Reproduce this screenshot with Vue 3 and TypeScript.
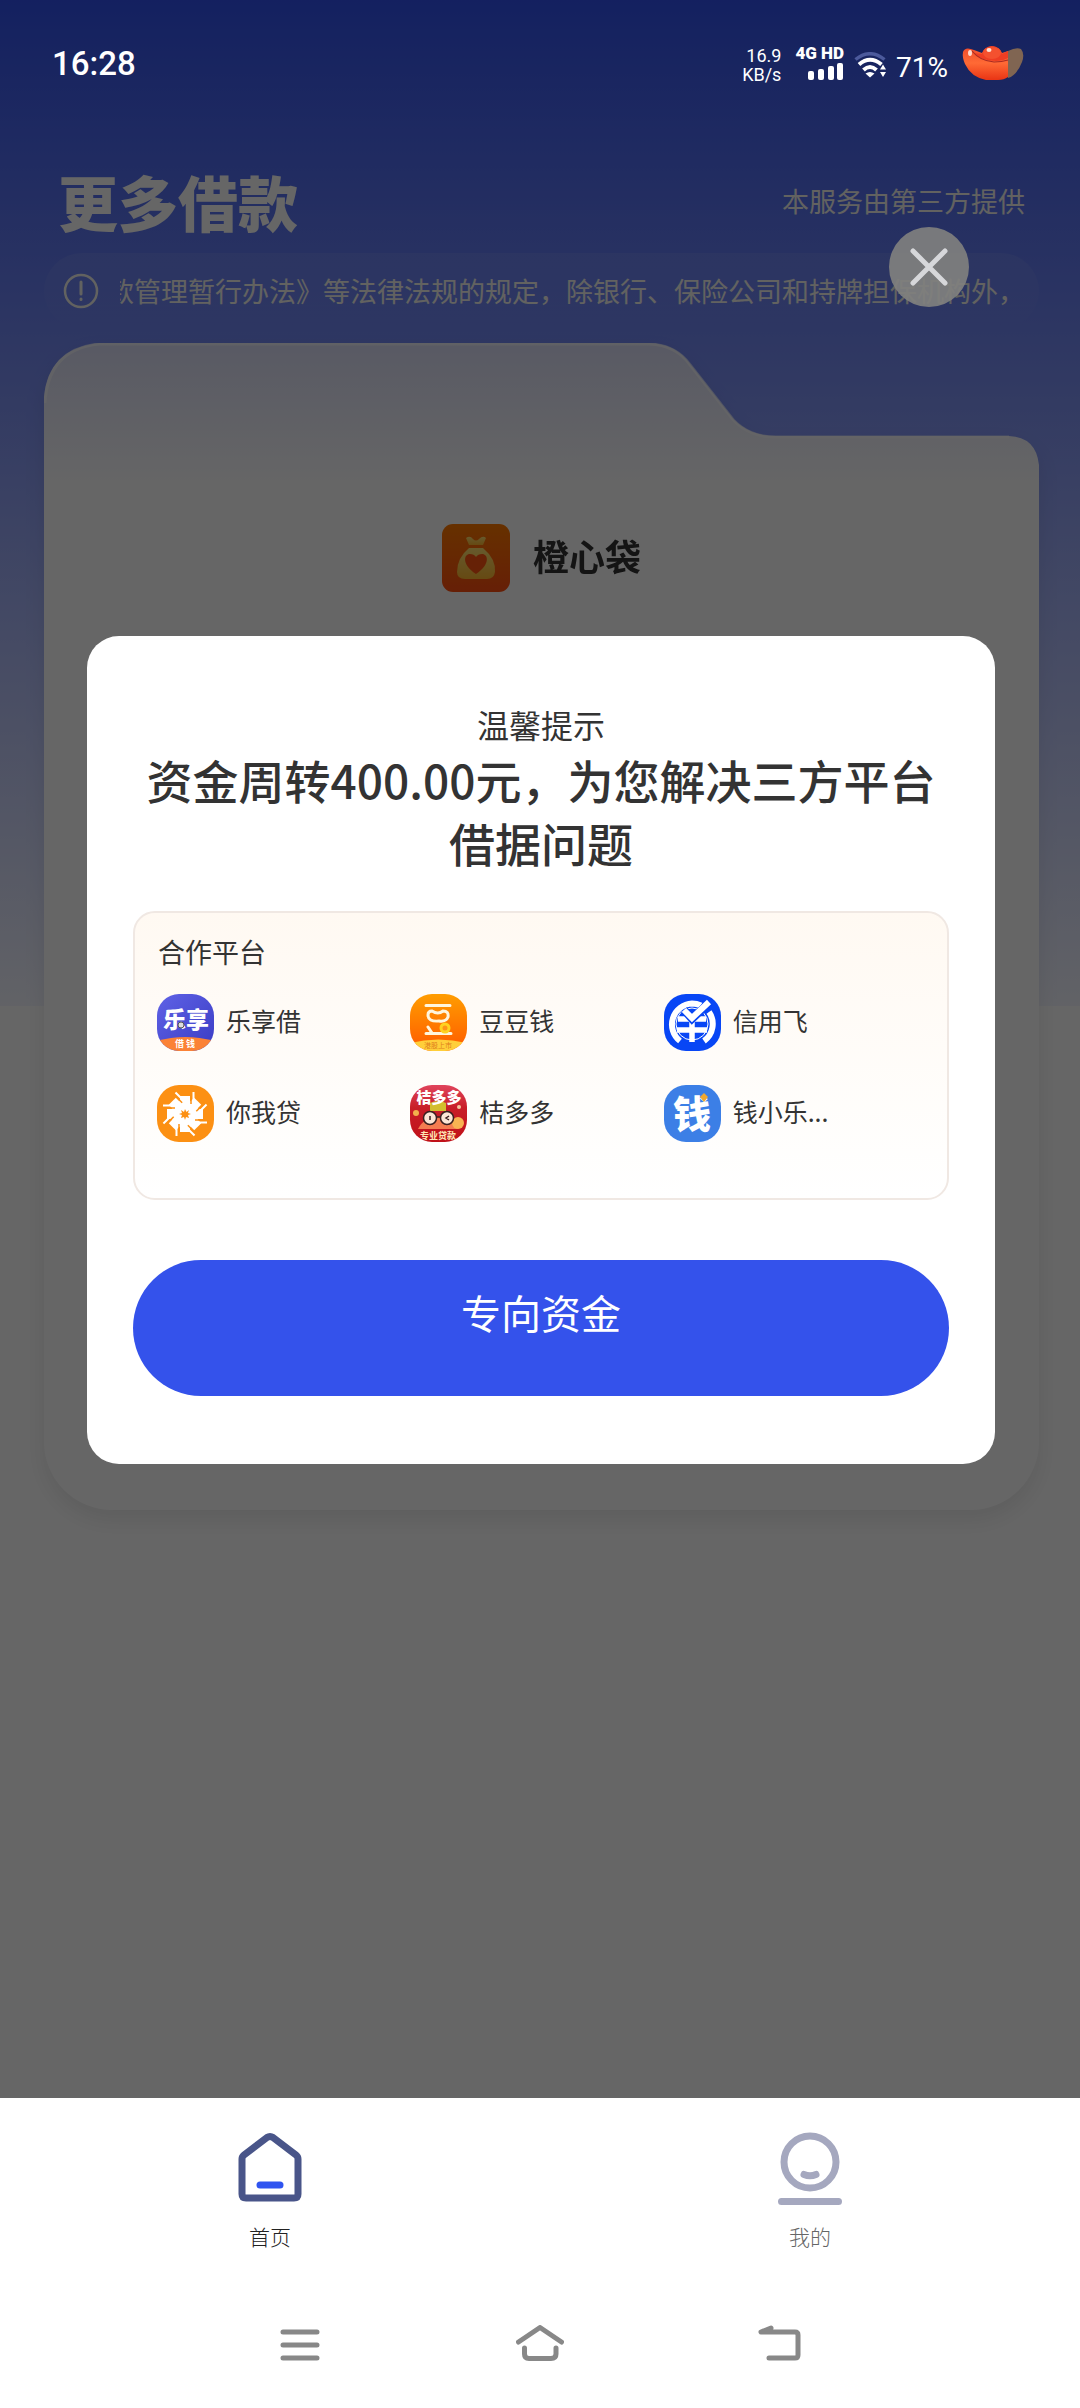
<script setup lang="ts">
import { ref } from 'vue'

interface Platform {
  id: string
  name: string
}

const platforms: Platform[] = [
  { id: 'lexiang', name: '乐享借' },
  { id: 'doudou', name: '豆豆钱' },
  { id: 'xinyong', name: '信用飞' },
  { id: 'niwo', name: '你我贷' },
  { id: 'jududuo', name: '桔多多' },
  { id: 'qianxiaole', name: '钱小乐...' },
]

const blades: number[] = [0, 45, 90, 135, 180, 225, 270, 315]
const open = ref<boolean>(true)
const notice = '款管理暂行办法》等法律法规的规定，除银行、保险公司和持牌担保机构外，'
</script>

<template>
  <div class="app">
    <header class="status">
      <time class="clock">16:28</time>
      <div class="indicators">
        <div class="speed"><span>16.9</span><span>KB/s</span></div>
        <div class="cell">
          <span>4G HD</span>
          <svg width="36" height="17" viewBox="0 0 36 17" fill="#fff" aria-hidden="true">
            <rect x="0" y="8" width="6" height="9" rx="2" />
            <rect x="10" y="6" width="6" height="11" rx="2" />
            <rect x="20" y="3" width="6" height="14" rx="2" />
            <rect x="29" y="0" width="6" height="17" rx="2" />
          </svg>
        </div>
        <svg class="wifi" width="34" height="26" viewBox="0 0 34 26" fill="none" aria-hidden="true">
          <path d="M1.5 7.5Q16 -4 30.5 7.5" stroke="#4c5a9c" stroke-width="3.5" />
          <path d="M5 12.5Q16 3 27.5 12.5" stroke="#fff" stroke-width="4" />
          <path d="M9.5 18Q16 12 22.5 18" stroke="#fff" stroke-width="4" />
          <path d="M11.500 21.500Q16 18.500 20.500 21.500L16 25.500Z" fill="#fff" />
          <path d="M26 17.500L29 12.500L32 17.500ZM26 20L29 25L32 20Z" fill="#fff" />
        </svg>
        <span class="percent">71%</span>
        <svg class="ingot" width="62" height="35" viewBox="0 0 62 35" aria-hidden="true">
          <defs>
            <linearGradient id="ingot" x1="0" y1="0" x2="0" y2="1">
              <stop offset="0" stop-color="#ef4a2c" />
              <stop offset=".5" stop-color="#ff6a35" />
              <stop offset="1" stop-color="#e93414" />
            </linearGradient>
          </defs>
          <path d="M46 5Q54 1 59 3Q63 8 60 16Q55 29 46 32Z" fill="#806552" />
          <path d="M1 6Q3 0 12 4L20 7Q22 1 30 0Q38 1 40 7L46 5V31Q42 34 36 34H24Q9 31 3 18Q0 11 1 6Z" fill="url(#ingot)" />
          <path d="M12 7Q20 15 34 15Q41 15 46 12V5L40 8Q38 1 30 0Q22 1 20 8Z" fill="#ee3d23" />
          <path d="M10 5Q18 15 32 16Q40 16 46 14" fill="none" stroke="#a92a22" stroke-width="1.2" />
          <ellipse cx="30" cy="7" rx="9" ry="6" fill="#f4512f" />
          <ellipse cx="27" cy="4" rx="2.5" ry="2" fill="#ffe3d6" />
          <ellipse cx="8" cy="7" rx="2" ry="3" fill="#ffd9cc" />
        </svg>
      </div>
    </header>

    <main class="page">
      <div class="title-row">
        <h1>更多借款</h1>
        <p>本服务由第三方提供</p>
      </div>

      <div class="notice">
        <svg width="36" height="36" viewBox="0 0 36 36" fill="none" stroke="currentColor" stroke-width="2.5" stroke-linecap="round" aria-hidden="true">
          <circle cx="18" cy="18" r="16" />
          <path d="M18 9V21M18 26V26.5" stroke-width="3" />
        </svg>
        <div class="ticker"><span>{{ notice }}</span></div>
      </div>

      <section class="card">
        <svg class="card-top" viewBox="0 0 996 150" preserveAspectRatio="none" aria-hidden="true">
          <defs>
            <linearGradient id="tab" x1="0" y1="0" x2="0" y2="1">
              <stop offset="0" stop-color="#dde0fa" />
              <stop offset=".95" stop-color="#fff" />
            </linearGradient>
          </defs>
          <path d="M0 150V54Q4 6 55 0H606Q632 1 646 20L690 76Q706 93 732 93H966Q993 94 996 122V150Z" fill="url(#tab)" />
          <path d="M1 60Q4 6 55 1H606Q632 2 646 21L690 77Q706 94 732 94H966" fill="none" stroke="#fff" stroke-opacity=".6" stroke-width="3" />
        </svg>
        <div class="card-body">
          <div class="brand">
            <svg width="68" height="68" viewBox="0 0 68 68" aria-hidden="true">
              <defs>
                <linearGradient id="bag" x1="0" y1="0" x2="0" y2="1">
                  <stop offset="0" stop-color="#ff7a00" />
                  <stop offset="1" stop-color="#ff4e10" />
                </linearGradient>
                <linearGradient id="sack" x1="0" y1="0" x2="0" y2="1">
                  <stop offset="0" stop-color="#ffe070" />
                  <stop offset="1" stop-color="#ffb830" />
                </linearGradient>
              </defs>
              <rect width="68" height="68" rx="11" fill="url(#bag)" />
              <path d="M24 14Q28 11 31 15Q34 18 37 15Q41 11 44 14L41 21H27Z" fill="url(#sack)" />
              <path d="M27 24H41Q54 35 53 48Q52 55 45 55H23Q15 55 15 48Q15 34 27 24Z" fill="url(#sack)" />
              <path d="M34 50C19 40 22 30 28 30Q32 30 34 33Q36 30 40 30C46 30 49 40 34 50Z" fill="#ff5410" />
            </svg>
            <h2>橙心袋</h2>
          </div>
        </div>
      </section>

      <div v-if="open" class="mask">
        <button class="close" type="button" aria-label="关闭" @click="open = false">
          <svg width="40" height="40" viewBox="0 0 40 40" fill="none" stroke="#d6d7da" stroke-width="5" stroke-linecap="round" aria-hidden="true">
            <path d="M4 4L36 36M36 4L4 36" />
          </svg>
        </button>

        <section class="dialog" role="dialog" aria-modal="true">
          <p class="hint">温馨提示</p>
          <h2 class="headline">资金周转400.00元，为您解决三方平台借据问题</h2>

          <div class="partners">
            <h3>合作平台</h3>
            <ul>
              <li v-for="p in platforms" :key="p.id">
                <svg class="logo" viewBox="0 0 57 57" aria-hidden="true">
                  <template v-if="p.id === 'lexiang'">
                    <defs>
                      <linearGradient id="lx" x1="0" y1="0" x2="1" y2="1">
                        <stop offset="0" stop-color="#5f62e6" />
                        <stop offset="1" stop-color="#3a3cc4" />
                      </linearGradient>
                    </defs>
                    <rect width="57" height="57" fill="url(#lx)" />
                    <path d="M0 47Q28 39 57 47V57H0Z" fill="#fb8236" />
                    <text x="29" y="34" font-size="23" font-weight="900" text-anchor="middle" fill="#fff">乐享</text>
                    <circle cx="24" cy="31" r="3" fill="#ddd" stroke="#555" />
                    <text x="28" y="53" font-size="9" font-weight="700" text-anchor="middle" fill="#fff">借 钱</text>
                  </template>
                  <template v-else-if="p.id === 'doudou'">
                    <defs>
                      <linearGradient id="dd" x1="0" y1="0" x2="0" y2="1">
                        <stop offset="0" stop-color="#ff9d00" />
                        <stop offset="1" stop-color="#ff5a00" />
                      </linearGradient>
                    </defs>
                    <rect width="57" height="57" fill="url(#dd)" />
                    <path d="M0 49Q28 42 57 49V57H0Z" fill="#ffcf3a" />
                    <g fill="none" stroke="#fff5dc" stroke-width="3" stroke-linecap="round">
                      <path d="M16 11.5H40M16 39.5H41M18 33L22 39" />
                      <path d="M22 17Q28 21 33 17Q39 17 38 23Q36 28 29 27Q18 28 18 21Q18 17 22 17Z" />
                    </g>
                    <circle cx="35" cy="34" r="4" fill="#ff9418" stroke="#ffd21f" stroke-width="3" />
                    <text x="28" y="54" font-size="7" text-anchor="middle" fill="#e0801c">港股上市</text>
                  </template>
                  <template v-else-if="p.id === 'xinyong'">
                    <rect width="57" height="57" fill="#0846f5" />
                    <path d="M16 47A21 21 0 0 1 28 9.5A21 21 0 0 1 37 11.500M45 18A21 21 0 0 1 40 47" fill="none" stroke="#fff" stroke-width="6" />
                    <circle cx="28" cy="30" r="16" fill="none" stroke="#fff" stroke-width="1" />
                    <path d="M14 25H42M13 36H43M28 28V48" stroke="#fff" stroke-width="5.5" />
                    <path d="M20 16L28 25L46 8" fill="none" stroke="#0846f5" stroke-width="8" />
                    <path d="M20 16L28 24L45 8" fill="none" stroke="#fff" stroke-width="6" />
                  </template>
                  <template v-else-if="p.id === 'niwo'">
                    <rect width="57" height="57" fill="#fc9013" />
                    <g transform="translate(28 29)" fill="none">
                      <circle r="14" fill="#fff" />
                      <g v-for="a in blades" :key="a" :transform="`rotate(${a})`">
                        <path d="M0 -8V-18" stroke="#fff" stroke-width="10" />
                        <path d="M8.500 -12V-22" stroke="#fff" stroke-width="2" />
                      </g>
                      <g v-for="a in blades" :key="`slit-${a}`" :transform="`rotate(${a})`">
                        <path d="M6 -10V-21" stroke="#fc9013" stroke-width="1.5" />
                      </g>
                      <path d="M0 -5L1.500 -2L4 -4L3 -1L6 0L3 1L4 4L1 3L0 6L-1 3L-4 4L-3 1L-6 0L-3 -1L-4 -4L-1 -2Z" fill="#fc9013" />
                    </g>
                  </template>
                  <template v-else-if="p.id === 'jududuo'">
                    <defs>
                      <linearGradient id="jd" x1="0" y1="0" x2="0" y2="1">
                        <stop offset="0" stop-color="#e0445c" />
                        <stop offset=".4" stop-color="#c81e28" />
                        <stop offset="1" stop-color="#c01018" />
                      </linearGradient>
                    </defs>
                    <rect width="57" height="57" fill="url(#jd)" />
                    <path d="M8 44Q14 32 28 32Q42 32 48 44Z" fill="#f47c50" />
                    <circle cx="48" cy="38" r="6" fill="#f8b352" />
                    <circle cx="6" cy="28" r="3" fill="#f3b04c" />
                    <circle cx="49" cy="22" r="2" fill="#f6c9a0" />
                    <path d="M20 18Q28 14 36 18V26H20Z" fill="#d3bd2f" />
                    <text x="29" y="18" font-size="15" font-weight="900" text-anchor="middle" fill="#fff">桔多多</text>
                    <g fill="#fbe6d6" stroke="#3a2020" stroke-width="1.5">
                      <circle cx="20" cy="33" r="6.5" />
                      <circle cx="37" cy="33" r="6.5" />
                      <path d="M26 32H31M20 31V35M39 31L36 33L39 35" fill="none" />
                    </g>
                    <text x="28" y="54" font-size="9" font-weight="700" text-anchor="middle" fill="#ffe9b8">专业贷款</text>
                  </template>
                  <template v-else>
                    <rect width="57" height="57" fill="#3c7fe6" />
                    <text x="28" y="43" font-size="38" font-weight="900" text-anchor="middle" fill="#fff">钱</text>
                    <path d="M40 8L44 12L40 17L36 12Z" fill="#f0a830" />
                  </template>
                </svg>
                <span>{{ p.name }}</span>
              </li>
            </ul>
          </div>

          <button class="cta" type="button">专向资金</button>
        </section>
      </div>
    </main>

    <nav class="tabs">
      <a href="#home" class="active">
        <svg width="72" height="76" viewBox="0 0 72 76" fill="none" stroke-linecap="round" stroke-linejoin="round" aria-hidden="true">
          <path d="M36 8.5Q37.5 8.5 39 9.5L62 27Q64 28.5 64 31V66Q64 70 60 70H12Q8 70 8 66V31Q8 28.5 10 27L33 9.5Q34.5 8.5 36 8.5Z" stroke="#495589" stroke-width="7" />
          <path d="M26 57H46" stroke="#2f54f0" stroke-width="7" />
        </svg>
        <span>首页</span>
      </a>
      <a href="#mine">
        <svg width="72" height="78" viewBox="0 0 72 78" fill="none" stroke="#a5a8bf" stroke-linecap="round" aria-hidden="true">
          <circle cx="36" cy="34" r="26" stroke-width="7" />
          <path d="M30 46.5Q36 49 42 46.5M7.5 73.5H64.5" stroke-width="7" />
        </svg>
        <span>我的</span>
      </a>
    </nav>

    <div class="system-nav">
      <button type="button" aria-label="最近任务">
        <svg width="48" height="40" viewBox="0 0 48 40" aria-hidden="true"><path d="M7 7H41M7 20H41M7 33H41" /></svg>
      </button>
      <button type="button" aria-label="主屏幕">
        <svg width="48" height="40" viewBox="0 0 48 40" aria-hidden="true"><path d="M2.5 17L24 2.500L45.500 17M8.500 23V29Q8.500 33.500 13 33.500H35Q40 33.500 40 29V23" /></svg>
      </button>
      <button type="button" aria-label="返回">
        <svg width="48" height="40" viewBox="0 0 48 40" aria-hidden="true"><path d="M15 3L5 7H39Q42 7 42 10V30Q42 33 39 33H13" /></svg>
      </button>
    </div>
  </div>
</template>

<style>
body {
  margin: 0;
}
</style>

<style scoped>
* {
  box-sizing: border-box;
}

.app {
  position: relative;
  display: flex;
  flex-direction: column;
  min-height: 100vh;
  background: #fff;
  color: #333;
  font-family: "Noto Sans CJK SC", "Noto Sans", sans-serif;
}

h1,
h2,
h3,
p,
ul {
  margin: 0;
  padding: 0;
  list-style: none;
}

button {
  padding: 0;
  border: 0;
  background: none;
  font-family: inherit;
  cursor: pointer;
}

svg {
  display: block;
  flex: none;
}

.status {
  position: absolute;
  z-index: 3;
  top: 0;
  left: 0;
  right: 0;
  display: flex;
  justify-content: space-between;
  padding: 44px 56px 0 52px;
  color: #fff;
  font-family: Roboto, "Noto Sans", sans-serif;
}

.clock {
  font-size: 33px;
  font-weight: 500;
  line-height: 40px;
}

.indicators {
  display: flex;
  align-items: flex-start;
  height: 40px;
}

.speed {
  display: flex;
  flex-direction: column;
  align-items: flex-end;
  margin: 2px 14px 0 0;
  font-size: 18px;
  line-height: 19px;
}

.cell {
  display: flex;
  flex-direction: column;
  align-items: flex-end;
  margin-right: 10px;
  font-size: 17px;
  font-weight: 900;
  line-height: 19px;
}

.wifi {
  margin-top: 8px;
}

.percent {
  margin: 4px 14px 0 8px;
  font-size: 28px;
  line-height: 40px;
}

.ingot {
  margin-top: 2px;
}

.page {
  position: relative;
  flex: 1;
  padding: 156px 41px 0 44px;
  background: linear-gradient(#3252f0 0, #f4f6ff 1006px, #fff 1006px);
}

.title-row {
  display: flex;
  align-items: center;
  justify-content: space-between;
  height: 90px;
  margin-bottom: 7px;
  padding: 0 14px;
  color: #fff;
}

.title-row h1 {
  font-size: 60px;
  font-weight: 900;
  line-height: 90px;
}

.title-row p {
  color: #f5f5f0;
  font-size: 27px;
  line-height: 40px;
}

.notice {
  display: flex;
  align-items: center;
  gap: 21px;
  height: 76px;
  margin-bottom: 14px;
  padding: 0 22px 0 19px;
  border-radius: 38px;
  background: linear-gradient(rgba(255, 255, 255, 0.07), rgba(255, 255, 255, 0));
  color: #f5f5f0;
}

.ticker {
  flex: 1;
  overflow: hidden;
  font-size: 27px;
  line-height: 40px;
  white-space: nowrap;
}

.ticker span {
  margin-left: -13px;
}

.card {
  filter: drop-shadow(0 10px 10px rgba(0, 0, 0, 0.08));
}

.card-top {
  width: 100%;
  height: 150px;
}

.card-body {
  height: 1017px;
  padding-top: 31px;
  border-radius: 0 0 68px 68px;
  background: #fff;
}

.brand {
  display: flex;
  align-items: center;
  justify-content: center;
  gap: 23px;
}

.brand h2 {
  padding-bottom: 6px;
  font-size: 36px;
  font-weight: 700;
  line-height: 52px;
}

.mask {
  position: absolute;
  inset: 0;
  padding: 636px 85px 0 87px;
  background: rgba(0, 0, 0, 0.6);
}

.close {
  position: absolute;
  top: 227px;
  right: 111px;
  display: flex;
  align-items: center;
  justify-content: center;
  width: 80px;
  height: 80px;
  border-radius: 50%;
  background: rgba(130, 130, 128, 0.9);
}

.dialog {
  padding: 64px 46px 68px;
  border-radius: 32px;
  background: #fff;
  text-align: center;
}

.hint {
  font-size: 32px;
  line-height: 48px;
}

.headline {
  padding: 0 10px;
  font-size: 46px;
  font-weight: 500;
  line-height: 63px;
}

.partners {
  height: 289px;
  margin: 37px 0 60px;
  padding: 19px 30px 19px 22px;
  border: 2px solid #f0e8e3;
  border-radius: 22px;
  background: linear-gradient(#fff9f2, #fff);
  text-align: left;
}

.partners h3 {
  padding-left: 1px;
  font-size: 27px;
  font-weight: 400;
  line-height: 40px;
}

.partners ul {
  display: grid;
  grid-template-columns: repeat(3, 1fr);
  row-gap: 34px;
  margin-top: 22px;
}

.partners li {
  display: flex;
  align-items: center;
  gap: 12px;
  font-size: 25px;
  line-height: 36px;
}

.partners li span {
  padding-bottom: 6px;
}

.logo {
  width: 57px;
  height: 57px;
  border-radius: 22px;
}

.cta {
  display: block;
  width: 100%;
  height: 136px;
  padding-bottom: 32px;
  border-radius: 68px;
  background: #3452eb;
  color: #fff;
  font-size: 40px;
}

.tabs {
  display: flex;
  height: 192px;
  padding-top: 30px;
}

.tabs a {
  display: flex;
  flex: 1;
  flex-direction: column;
  align-items: center;
  justify-content: space-between;
  height: 124px;
  color: #666;
  font-size: 21px;
  font-weight: 300;
  line-height: 32px;
  text-decoration: none;
}

.tabs .active {
  color: #222;
}

.system-nav {
  display: flex;
  justify-content: center;
  gap: 192px;
  height: 118px;
  padding-top: 35px;
}

.system-nav button {
  height: 40px;
}

.system-nav path {
  fill: none;
  stroke: #888;
  stroke-width: 5;
  stroke-linecap: round;
  stroke-linejoin: round;
}
</style>
